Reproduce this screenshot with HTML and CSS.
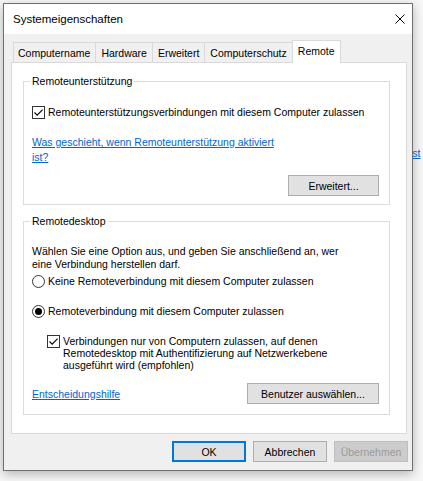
FILE: index.html
```html
<!DOCTYPE html>
<html lang="de">
<head>
<meta charset="utf-8">
<title>Systemeigenschaften</title>
<link rel="stylesheet" href="styles.css">
</head>
<body>
<div class="desk">
  <div class="window">
    <div class="titlebar">
      <span class="title">Systemeigenschaften</span>
      <svg class="close" width="10" height="10" viewBox="0 0 10 10"><path d="M0.5 0.5L9.5 9.5M9.5 0.5L0.5 9.5" stroke="#000" stroke-width="1" fill="none"/></svg>
    </div>
    <div class="body">
      <div class="tabs">
        <div class="tab">Computername</div>
        <div class="tab">Hardware</div>
        <div class="tab">Erweitert</div>
        <div class="tab">Computerschutz</div>
        <div class="tab active">Remote</div>
      </div>
      <div class="panel">
        <div class="group g1">
          <div class="group-title">Remoteunterstützung</div>
          <div class="check-row first">
            <span class="box"><svg width="11" height="11" viewBox="0 0 11 11"><path d="M1.5 5.5L4.2 8.2L9.6 2.6" stroke="#000" stroke-width="1.1" fill="none"/></svg></span>
            <span>Remoteunterstützungsverbindungen mit diesem Computer zulassen</span>
          </div>
          <a class="link help" href="#">Was geschieht, wenn Remoteunterstützung aktiviert<br>ist?</a>
          <div class="btn-row g1-btns"><button class="btn btn-erw">Erweitert...</button></div>
        </div>
        <div class="group g2">
          <div class="group-title">Remotedesktop</div>
          <p class="desc">Wählen Sie eine Option aus, und geben Sie anschließend an, wer<br>eine Verbindung herstellen darf.</p>
          <div class="radio-row r1"><span class="radio"></span><span>Keine Remoteverbindung mit diesem Computer zulassen</span></div>
          <div class="radio-row r2"><span class="radio on"><span class="dot"></span></span><span>Remoteverbindung mit diesem Computer zulassen</span></div>
          <div class="check-row nla">
            <span class="box"><svg width="11" height="11" viewBox="0 0 11 11"><path d="M1.5 5.5L4.2 8.2L9.6 2.6" stroke="#000" stroke-width="1.1" fill="none"/></svg></span>
            <span class="nla-text">Verbindungen nur von Computern zulassen, auf denen<br>Remotedesktop mit Authentifizierung auf Netzwerkebene<br>ausgeführt wird (empfohlen)</span>
          </div>
          <div class="btn-row g2-btns">
            <a class="link" href="#">Entscheidungshilfe</a>
            <button class="btn btn-user">Benutzer auswählen...</button>
          </div>
        </div>
      </div>
      <div class="footer">
        <button class="btn fbtn default">OK</button>
        <button class="btn fbtn">Abbrechen</button>
        <button class="btn fbtn disabled">Übernehmen</button>
      </div>
    </div>
  </div>
  <div class="desk-edge"><span class="edge-link">ist</span></div>
</div>
</body>
</html>
```
FILE: styles.css
```css
html, body {
  margin: 0;
  padding: 0;
}
body {
  width: 423px;
  height: 481px;
  overflow: hidden;
  background: #f7f7f7;
  font-family: "Liberation Sans", Arial, sans-serif;
  font-size: 10.5px;
  color: #000;
}
.desk {
  display: flex;
  padding: 3px 0 0 3px;
}
.window {
  width: 410px;
  height: 468px;
  box-sizing: border-box;
  border: 1px solid #707070;
  background: #f0f0f0;
  box-shadow: 0 3px 10px rgba(0, 0, 0, 0.28);
  display: flex;
  flex-direction: column;
  flex: none;
}
.titlebar {
  height: 30px;
  flex: none;
  background: #fff;
  display: flex;
  align-items: center;
  justify-content: space-between;
  padding: 0 7px 0 9px;
}
.title {
  font-size: 11.5px;
}
.close {
  display: block;
}
.body {
  padding: 6px 0 0 7px;
  display: flex;
  flex-direction: column;
}
.tabs {
  display: flex;
  align-items: flex-end;
  height: 22px;
  padding-left: 2px;
  position: relative;
  z-index: 1;
}
.tab {
  box-sizing: border-box;
  height: 20px;
  line-height: 20px;
  padding: 0 5px 0 5px;
  border: 1px solid #d9d9d9;
  border-bottom: none;
  background: #f0f0f0;
  margin-left: -1px;
  white-space: nowrap;
}
.tab:first-child {
  margin-left: 0;
  padding: 0 5px 0 4px;
}
.tab.active {
  height: 23px;
  line-height: 20px;
  background: #fff;
  margin-bottom: -1px;
  padding: 0 5px 0 5px;
}
.panel {
  box-sizing: border-box;
  width: 396px;
  height: 372px;
  border: 1px solid #d9d9d9;
  background: #fff;
  padding: 18px 0 0 11px;
}
.group {
  position: relative;
  box-sizing: border-box;
  width: 367px;
  border: 1px solid #dcdcdc;
  display: flex;
  flex-direction: column;
}
.g1 {
  padding: 0 10px 8px 8px;
}
.g2 {
  margin-top: 16px;
  padding: 0 10px 10px 8px;
}
.group-title {
  position: absolute;
  top: -7px;
  left: 6px;
  line-height: 13px;
  padding: 0 2px;
  background: #fff;
}
.check-row {
  display: flex;
  align-items: flex-start;
  line-height: 13px;
}
.check-row.first {
  margin-top: 24px;
}
.box {
  box-sizing: border-box;
  width: 13px;
  height: 13px;
  border: 1px solid #333;
  background: #fff;
  margin-right: 3px;
  flex: none;
  display: flex;
}
.link {
  color: #0066cc;
  text-decoration: underline;
}
.help {
  display: block;
  margin-top: 16px;
  line-height: 15px;
}
.btn-row {
  display: flex;
  justify-content: flex-end;
  align-items: center;
}
.g1-btns {
  margin-top: 10px;
}
.g2-btns {
  margin-top: 12px;
  justify-content: space-between;
}
.btn {
  box-sizing: border-box;
  height: 21px;
  border: 1px solid #adadad;
  background: #e1e1e1;
  font-family: inherit;
  font-size: 10.5px;
  color: #000;
  padding: 0;
  margin: 0;
}
.btn-erw {
  width: 91px;
}
.btn-user {
  width: 132px;
}
.desc {
  margin: 23px 0 0 0;
  line-height: 13px;
}
.radio-row {
  display: flex;
  align-items: center;
  line-height: 13px;
}
.r1 {
  margin-top: 4px;
}
.r2 {
  margin-top: 17px;
}
.radio {
  box-sizing: border-box;
  width: 13px;
  height: 13px;
  border: 1px solid #333;
  border-radius: 50%;
  background: #fff;
  margin-right: 3px;
  flex: none;
  display: flex;
  align-items: center;
  justify-content: center;
}
.dot {
  width: 7px;
  height: 7px;
  border-radius: 50%;
  background: #000;
}
.nla {
  margin-top: 17px;
  margin-left: 15px;
  line-height: 12px;
}
.footer {
  display: flex;
  justify-content: flex-end;
  gap: 7px;
  margin-top: 7px;
  padding-right: 4px;
}
.fbtn {
  width: 74px;
}
.fbtn.default {
  border: 2px solid #0078d7;
}
.fbtn.disabled {
  background: #cccccc;
  border-color: #bfbfbf;
  color: #9a9a9a;
}
.desk-edge {
  flex: none;
  width: 10px;
  overflow: hidden;
  padding-top: 144px;
  line-height: 13px;
}
.edge-link {
  display: block;
  margin-left: -3px;
  color: #0066cc;
  text-decoration: underline;
}
```
